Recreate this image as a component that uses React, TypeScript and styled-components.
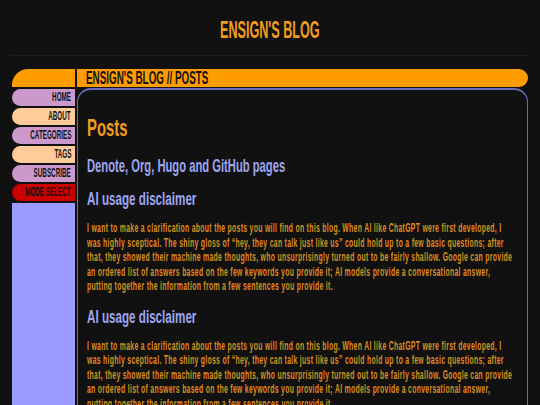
import { createGlobalStyle } from 'styled-components';
import styled from 'styled-components';

const GlobalStyle = createGlobalStyle`
  html, body {
    margin: 0;
    padding: 0;
    height: 100%;
    overflow: hidden;
    background-color: #111111;
  }
`;

// no condensed face is installed, so the wide sans gets squeezed per text
const Squeezed = styled.span<{ $x: number; $origin?: string }>`
  display: inline-block;
  flex-shrink: 0;
  white-space: nowrap;
  transform: scaleX(${(p) => p.$x});
  transform-origin: ${(p) => p.$origin ?? 'left'} center;
`;

const Page = styled.div`
  width: 540px;
  height: 405px;
  overflow: hidden;
  font-family: "Liberation Sans", Arial, sans-serif;
  background-color: #111111;
`;

const Header = styled.header`
  height: 56px;
  margin: 0 10px;
  border-bottom: 1px solid #1c1c1c;
  display: flex;
  justify-content: center;
  align-items: center;
  padding-top: 4px;
  box-sizing: border-box;
`;

const SiteTitle = styled.h1`
  margin: 0;
  color: #f29c1f;
  font-size: 24px;
  font-weight: 700;
`;

const Frame = styled.div`
  display: grid;
  grid-template-columns: 63px 451px;
  column-gap: 2px;
  margin: 13px 0 0 12px;
`;

const Sidebar = styled.nav`
  display: flex;
  flex-direction: column;
  gap: 2px;
  height: 336px;
`;

const SideCap = styled.div`
  height: 18px;
  background-color: #ff9c00;
  border-radius: 16px 0 0 0;
`;

const NavItem = styled.a<{ $color: string }>`
  height: 17px;
  background-color: ${(p) => p.$color};
  border-radius: 9px 0 0 9px;
  display: flex;
  justify-content: flex-end;
  align-items: center;
  padding-right: 4px;
  color: #111111;
  font-size: 12px;
  font-weight: 700;
  line-height: 17px;
`;

const SideFill = styled.div`
  flex: 1;
  background-color: #9c9cff;
`;

const Main = styled.div`
  display: flex;
  flex-direction: column;
  gap: 1px;
`;

const TitleBar = styled.div`
  height: 18px;
  background-color: #ff9c00;
  border-radius: 0 9px 9px 0;
  padding-left: 9px;
  color: #111111;
  font-size: 18px;
  font-weight: 700;
  line-height: 18px;
`;

const Content = styled.main`
  height: 330px;
  border: 1px solid #6a6ab8;
  border-top-width: 2px;
  border-radius: 14px 14px 0 0;
  padding: 16px 9px 0 9px;
`;

const PageTitle = styled.h1`
  margin: 0 0 5px;
  color: #f29c1f;
  font-size: 24px;
  line-height: 44px;
`;

const PostLink = styled.h2`
  margin: 0 0 11px;
  color: #9ea6f0;
  font-size: 18px;
  line-height: 22px;
`;

const Section = styled.h2`
  margin: 0 0 11px;
  color: #9ea6f0;
  font-size: 18px;
  line-height: 22px;
`;

const Paragraph = styled.p`
  margin: 0 0 12px;
  color: #d98e1e;
  font-size: 12px;
  font-weight: 700;
  letter-spacing: 0.55px;
  line-height: 14.5px;
  height: 72.5px;
`;

const Line = styled(Squeezed)`
  display: block;
`;

const navItems = [
  { label: 'HOME', color: '#cc99cc' },
  { label: 'ABOUT', color: '#ffcc99' },
  { label: 'CATEGORIES', color: '#cc99cc' },
  { label: 'TAGS', color: '#ffcc99' },
  { label: 'SUBSCRIBE', color: '#cc99cc' },
  { label: 'MODE SELECT', color: '#cc0000' },
];

const disclaimer = [
  'I want to make a clarification about the posts you will find on this blog. When AI like ChatGPT were first developed, I',
  'was highly sceptical. The shiny gloss of “hey, they can talk just like us” could hold up to a few basic questions; after',
  'that, they showed their machine made thoughts, who unsurprisingly turned out to be fairly shallow. Google can provide',
  'an ordered list of answers based on the few keywords you provide it; AI models provide a conversational answer,',
  'putting together the information from a few sentences you provide it.',
];

export default function App() {
  return (
    <Page>
      <GlobalStyle />
      <Header>
        <SiteTitle>
          <Squeezed $x={0.525} $origin="center">ENSIGN'S BLOG</Squeezed>
        </SiteTitle>
      </Header>
      <Frame>
        <Sidebar>
          <SideCap />
          {navItems.map((item) => (
            <NavItem key={item.label} $color={item.color}>
              <Squeezed $x={0.525} $origin="right">{item.label}</Squeezed>
            </NavItem>
          ))}
          <SideFill />
        </Sidebar>
        <Main>
          <TitleBar>
            <Squeezed $x={0.548}>ENSIGN'S BLOG // POSTS</Squeezed>
          </TitleBar>
          <Content>
            <PageTitle>
              <Squeezed $x={0.62}>Posts</Squeezed>
            </PageTitle>
            <PostLink>
              <Squeezed $x={0.623}>Denote, Org, Hugo and GitHub pages</Squeezed>
            </PostLink>
            {[0, 1].map((n) => (
              <div key={n}>
                <Section>
                  <Squeezed $x={0.647}>AI usage disclaimer</Squeezed>
                </Section>
                <Paragraph>
                  {disclaimer.map((line) => (
                    <Line key={line} $x={0.57}>{line}</Line>
                  ))}
                </Paragraph>
              </div>
            ))}
          </Content>
        </Main>
      </Frame>
    </Page>
  );
}
